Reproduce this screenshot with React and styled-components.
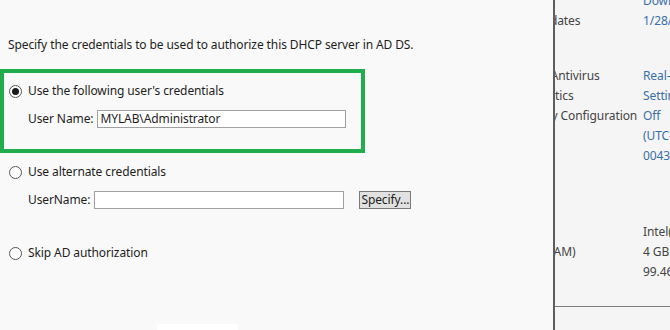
import styled, { createGlobalStyle } from 'styled-components';

const GlobalStyle = createGlobalStyle`
    html, body {
        margin: 0;
        padding: 0;
        width: 670px;
        height: 330px;
        overflow: hidden;
        background: #f3f3f3;
        font-family: "Noto Sans", "Open Sans", sans-serif;
        font-size: 12px;
        letter-spacing: -0.1px;
        color: #1e1e1e;
    }
`;

const Desktop = styled.div`
    position: relative;
    width: 670px;
    height: 330px;
    overflow: hidden;
    background: #f5f5f5;
`;

// server manager window behind the dialog
const ServerManager = styled.div`
    width: 670px;
    height: 330px;
    display: flex;
    flex-direction: column;
    padding-left: 442px;
    box-sizing: border-box;
`;

const Properties = styled.div`
    display: flex;
    flex-direction: column;
    margin-top: -9px;
`;

const PropGroup = styled.div`
    display: flex;
    flex-direction: column;
    margin-bottom: ${(props) => props.gap || 0}px;
`;

const PropRow = styled.div`
    display: grid;
    grid-template-columns: 201px 1fr;
    height: 20px;
    line-height: 20px;
    white-space: nowrap;
    overflow: hidden;
`;

const PropLabel = styled.span`
    color: #444;
`;

const PropValue = styled.span`
    color: ${(props) => (props.link ? '#3a6ea8' : '#444')};
`;

const Divider = styled.div`
    margin-top: auto;
    margin-bottom: 23px;
    height: 1px;
    flex-shrink: 0;
    background: #7a7a7a;
`;

const Dialog = styled.div`
    position: absolute;
    left: 0;
    top: 0;
    width: 553px;
    height: 330px;
    background: #f9f9f9;
    border-right: 2px solid #5e5e5e;
    display: flex;
    flex-direction: column;
`;

const Intro = styled.p`
    margin: 37px 0 0 8px;
    line-height: 16px;
`;

const Highlight = styled.div`
    margin-top: 16px;
    width: 365px;
    height: 84px;
    box-sizing: border-box;
    border: 4px solid #22ad4c;
    padding: 10px 0 0 5px;
    display: flex;
    flex-direction: column;
`;

const Option = styled.div`
    display: flex;
    flex-direction: column;
    padding-left: ${(props) => props.indent || 0}px;
    margin-top: ${(props) => props.top || 0}px;
`;

const RadioRow = styled.label`
    display: flex;
    align-items: center;
    gap: 6px;
    height: 16px;
    line-height: 16px;
`;

const Radio = styled.span`
    width: 11px;
    height: 11px;
    border-radius: 50%;
    border: 1px solid #555;
    background: #fff;
    display: flex;
    align-items: center;
    justify-content: center;

    &::after {
        content: '';
        width: 7px;
        height: 7px;
        border-radius: 50%;
        background: ${(props) => (props.checked ? '#1a1a1a' : 'transparent')};
    }
`;

const FieldRow = styled.div`
    display: flex;
    align-items: center;
    gap: ${(props) => props.gap || 4}px;
    margin-top: ${(props) => props.top || 0}px;
    padding-left: 19px;
`;

const FieldLabel = styled.span`
    line-height: 16px;
`;

const TextBox = styled.div`
    width: ${(props) => props.width}px;
    height: 18px;
    box-sizing: border-box;
    border: 1px solid #a0a0a0;
    background: #fff;
    padding-left: 2px;
    line-height: 16px;
    color: #1e1e1e;
`;

const Button = styled.button`
    margin-left: ${(props) => props.offset || 0}px;
    height: 18px;
    padding: 0 1px;
    border: 1px solid #7a7a7a;
    background: #e1e1e1;
    font: inherit;
    letter-spacing: inherit;
    color: #1e1e1e;
    line-height: 14px;
`;

const Footer = styled.div`
    margin-top: auto;
    padding-left: 157px;
`;

const FooterButton = styled.div`
    width: 81px;
    height: 6px;
    background: #fff;
`;

export default function App() {
    return (
        <>
            <GlobalStyle />
            <Desktop>
                <ServerManager>
                    <Properties>
                        <PropGroup gap={35}>
                            <PropRow>
                                <PropLabel>Windows Update</PropLabel>
                                <PropValue link>Download updates only</PropValue>
                            </PropRow>
                            <PropRow>
                                <PropLabel>Last checked for updates</PropLabel>
                                <PropValue link>1/28/2018</PropValue>
                            </PropRow>
                        </PropGroup>
                        <PropGroup gap={56}>
                            <PropRow>
                                <PropLabel>Windows Defender Antivirus</PropLabel>
                                <PropValue link>Real-Time Protection: On</PropValue>
                            </PropRow>
                            <PropRow>
                                <PropLabel>Feedback & Diagnostics</PropLabel>
                                <PropValue link>Settings</PropValue>
                            </PropRow>
                            <PropRow>
                                <PropLabel>IE Enhanced Security Configuration</PropLabel>
                                <PropValue link>Off</PropValue>
                            </PropRow>
                            <PropRow>
                                <PropLabel>Time zone</PropLabel>
                                <PropValue link>(UTC-08:00) Pacific Time</PropValue>
                            </PropRow>
                            <PropRow>
                                <PropLabel>Product ID</PropLabel>
                                <PropValue link>00431-10000-00000-AA000</PropValue>
                            </PropRow>
                        </PropGroup>
                        <PropGroup>
                            <PropRow>
                                <PropLabel>Processors</PropLabel>
                                <PropValue>Intel(R) Core(TM) i7 CPU</PropValue>
                            </PropRow>
                            <PropRow>
                                <PropLabel>Installed memory (RAM)</PropLabel>
                                <PropValue>4 GB</PropValue>
                            </PropRow>
                            <PropRow>
                                <PropLabel>Total disk space</PropLabel>
                                <PropValue>99.46 GB</PropValue>
                            </PropRow>
                        </PropGroup>
                    </Properties>
                    <Divider />
                </ServerManager>

                <Dialog>
                    <Intro>Specify the credentials to be used to authorize this DHCP server in AD DS.</Intro>

                    <Highlight>
                        <RadioRow>
                            <Radio checked />
                            Use the following user's credentials
                        </RadioRow>
                        <FieldRow top={11}>
                            <FieldLabel>User Name:</FieldLabel>
                            <TextBox width={249}>MYLAB\Administrator</TextBox>
                        </FieldRow>
                    </Highlight>

                    <Option indent={9} top={11}>
                        <RadioRow>
                            <Radio />
                            Use alternate credentials
                        </RadioRow>
                        <FieldRow top={11}>
                            <FieldLabel>UserName:</FieldLabel>
                            <TextBox width={250} />
                            <Button offset={11}>Specify...</Button>
                        </FieldRow>
                    </Option>

                    <Option indent={9} top={36}>
                        <RadioRow>
                            <Radio />
                            Skip AD authorization
                        </RadioRow>
                    </Option>

                    <Footer>
                        <FooterButton />
                    </Footer>
                </Dialog>
            </Desktop>
        </>
    );
}
